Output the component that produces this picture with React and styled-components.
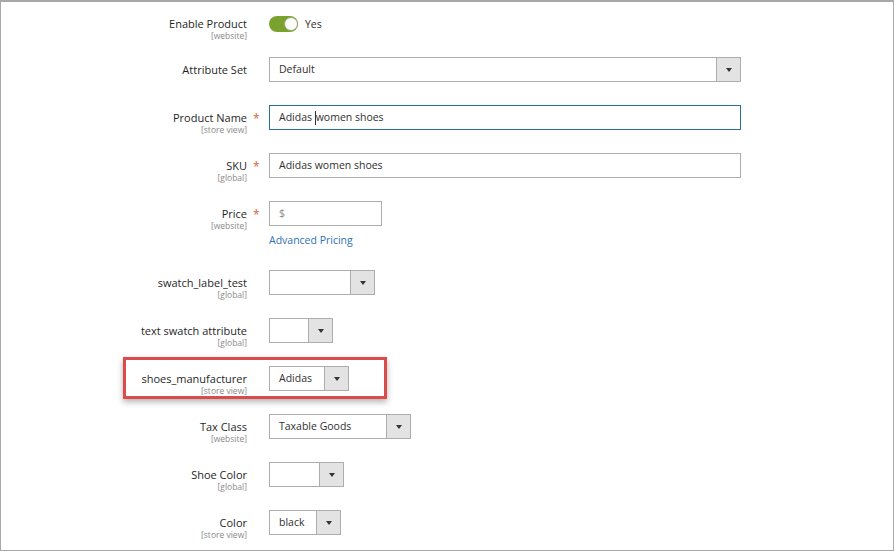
import React from 'react';
import styled, { createGlobalStyle } from "styled-components";

const GlobalStyle = createGlobalStyle`
    body {
        margin: 0;
        background: #fff;
        font-family: 'Open Sans', 'Liberation Sans', sans-serif;
    }
`

const S = {}

S.Frame = styled.div`
    width: 894px;
    height: 551px;
    box-sizing: border-box;
    border: 1px solid #a8a8a8;
    border-top-width: 2px;
    padding-top: 9px;
    display: flex;
    flex-direction: column;
    gap: 23px;
    overflow: hidden;
`

S.Row = styled.div`
    position: relative;
    display: grid;
    grid-template-columns: 246px 22px 1fr;
    align-items: start;

    &:first-child {
        margin-bottom: -2px;
    }
`

S.LabelBox = styled.div`
    height: 25px;
    text-align: right;
    padding-top: 5px;
    box-sizing: border-box;
`

S.Label = styled.div`
    font-size: 11px;
    line-height: 15px;
    color: #1f1f1f;
    font-weight: 400;
    white-space: nowrap;
`

S.Scope = styled.div`
    font-size: 8.5px;
    line-height: 10px;
    color: #8a8a8a;
    white-space: nowrap;
`

S.Star = styled.span`
    padding: 6px 0 0 6px;
    font-size: 12px;
    line-height: 15px;
    color: #d9603b;
`

S.Control = styled.div`
    display: flex;
    flex-direction: column;
    align-items: flex-start;
`

S.Input = styled.div`
    box-sizing: border-box;
    width: ${p => p.w}px;
    height: 25px;
    border: 1px solid ${p => p.focus ? '#2a7390' : '#adadad'};
    padding-left: 9px;
    font-size: 10.5px;
    line-height: 23px;
    color: ${p => p.muted ? '#8a8a8a' : '#303030'};
    display: flex;
    align-items: center;
    white-space: pre;
`

S.Caret = styled.span`
    display: inline-block;
    width: 1px;
    height: 14px;
    background: #303030;
`

S.Select = styled.div`
    box-sizing: border-box;
    width: ${p => p.w}px;
    height: 25px;
    border: 1px solid #adadad;
    display: flex;
    font-size: 10.5px;
    color: #303030;
`

S.SelectText = styled.div`
    flex: 1;
    padding-left: 9px;
    line-height: 23px;
`

S.SelectBtn = styled.div`
    width: 23px;
    background: #e3e3e3;
    border-left: 1px solid #adadad;
    display: flex;
    align-items: center;
    justify-content: center;

    &::after {
        content: '';
        border-left: 3px solid transparent;
        border-right: 3px solid transparent;
        border-top: 4px solid #333;
    }
`

S.Toggle = styled.div`
    display: flex;
    align-items: center;
    gap: 7px;
    height: 25px;
    font-size: 10.5px;
    color: #303030;
`

S.Switch = styled.div`
    width: 29px;
    height: 16px;
    border-radius: 8px;
    background: #79a22e;
    display: flex;
    justify-content: flex-end;
    align-items: center;

    &::after {
        content: '';
        width: 14px;
        height: 14px;
        border-radius: 50%;
        background: #fff;
        border: 1px solid #8fa86a;
        box-sizing: border-box;
    }
`

S.Link = styled.span`
    margin-top: 8px;
    font-size: 10.5px;
    line-height: 13px;
    color: #2d72b8;
`

S.Highlight = styled.div`
    position: absolute;
    left: 122px;
    top: -9px;
    width: 264px;
    height: 42px;
    box-sizing: border-box;
    border: 3px solid #dc4b4b;
    box-shadow: 0 3px 6px rgba(0, 0, 0, 0.3);
    pointer-events: none;
`

function Field({ label, scope, required, children, highlight }) {
    return (
        <S.Row>
            <S.LabelBox>
                <S.Label>{label}</S.Label>
                {scope && <S.Scope>[{scope}]</S.Scope>}
            </S.LabelBox>
            {required ? <S.Star>*</S.Star> : <span />}
            <S.Control>{children}</S.Control>
            {highlight && <S.Highlight />}
        </S.Row>
    )
}

function Select({ w, value }) {
    return (
        <S.Select w={w}>
            <S.SelectText>{value}</S.SelectText>
            <S.SelectBtn />
        </S.Select>
    )
}

export default function App() {
    return (
        <S.Frame>
            <GlobalStyle />
            <Field label="Enable Product" scope="website">
                <S.Toggle>
                    <S.Switch />
                    Yes
                </S.Toggle>
            </Field>

            <Field label="Attribute Set">
                <Select w={472} value="Default" />
            </Field>

            <Field label="Product Name" scope="store view" required>
                <S.Input w={472} focus>Adidas <S.Caret />women shoes</S.Input>
            </Field>

            <Field label="SKU" scope="global" required>
                <S.Input w={472}>Adidas women shoes</S.Input>
            </Field>

            <Field label="Price" scope="website" required>
                <S.Input w={113} muted>$</S.Input>
                <S.Link>Advanced Pricing</S.Link>
            </Field>

            <Field label="swatch_label_test" scope="global">
                <Select w={106} />
            </Field>

            <Field label="text swatch attribute" scope="global">
                <Select w={64} />
            </Field>

            <Field label="shoes_manufacturer" scope="store view" highlight>
                <Select w={80} value="Adidas" />
            </Field>

            <Field label="Tax Class" scope="website">
                <Select w={142} value="Taxable Goods" />
            </Field>

            <Field label="Shoe Color" scope="global">
                <Select w={75} />
            </Field>

            <Field label="Color" scope="store view">
                <Select w={72} value="black" />
            </Field>
        </S.Frame>
    )
}
